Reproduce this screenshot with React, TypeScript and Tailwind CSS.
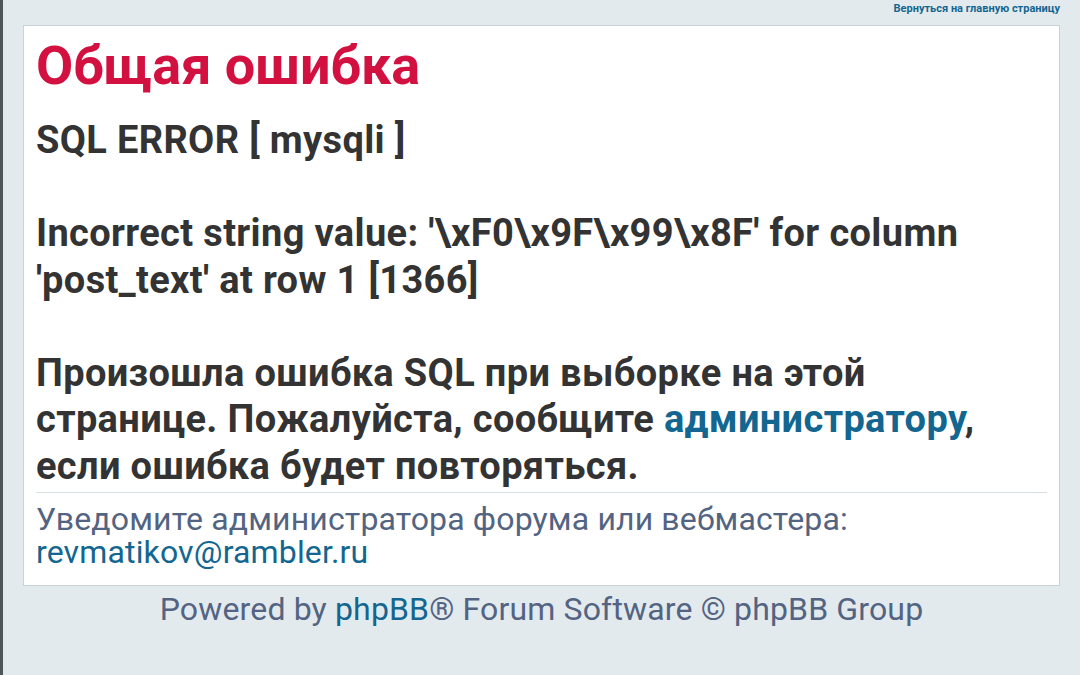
import React from 'react';

const App: React.FC = () => {
  return (
    <div className="min-h-[675px] bg-[#e3eaee] border-l-[3px] border-[#4f5558] px-[20px] font-['Roboto',sans-serif]">
      {/* top link */}
      <div className="h-[25px] text-right text-[11px] font-bold leading-[17px] text-[#136690]">
        <a href="#">Вернуться на главную страницу</a>
      </div>

      {/* error panel */}
      <div className="bg-white border border-[#c8d2d9] px-[12px] pt-[10px] pb-[16px]">
        <h1 className="text-[54px] font-bold leading-[60px] text-[#d31141]">Общая ошибка</h1>
        <div className="mt-[21px] pb-[3px] text-[38px] font-bold leading-[46.5px] tracking-[0.35px] text-[#333333] border-b border-[#d9e0e4]">
          <p className="pr-[24px]">
            SQL ERROR [ mysqli ]
            <br />
            <br />
            Incorrect string value: '\xF0\x9F\x99\x8F' for column 'post_text' at row 1 [1366]
            <br />
            <br />
            Произошла ошибка SQL при выборке на этой странице. Пожалуйста, сообщите{' '}
            <a href="#" className="text-[#136690]">администратору</a>, если ошибка будет повторяться.
          </p>
        </div>
        <div className="pt-[10px] text-[32px] leading-[33px] tracking-[0.15px] text-[#536482]">
          Уведомите администратора форума или вебмастера:
          <br />
          <a href="#" className="text-[#136690]">revmatikov@rambler.ru</a>
        </div>
      </div>

      {/* footer */}
      <div className="pt-[3px] text-center text-[32px] leading-[40px] tracking-[0.15px] text-[#536482]">
        Powered by <a href="#" className="text-[#136690]">phpBB</a>® Forum Software © phpBB Group
      </div>
    </div>
  );
};

export default App;
